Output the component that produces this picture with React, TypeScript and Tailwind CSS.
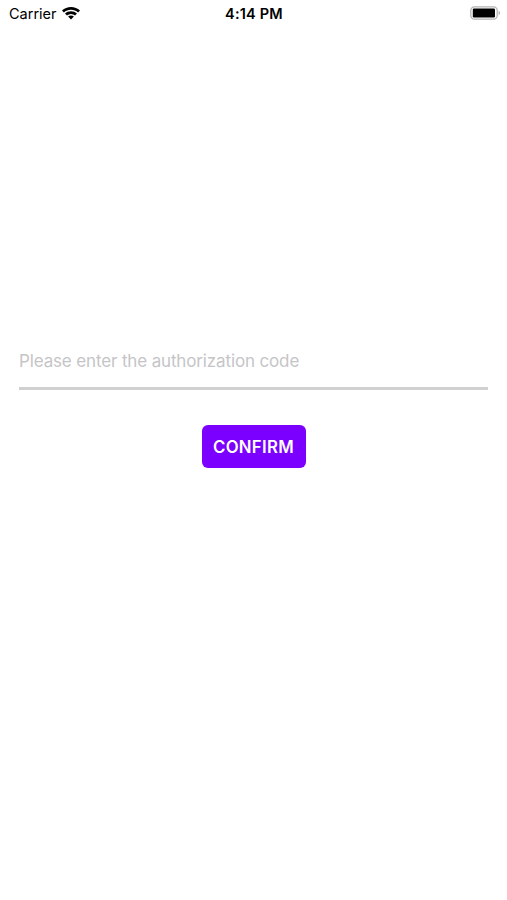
const WifiIcon = () => (
  <svg viewBox="0 0 18 13" className="w-[18px] h-[13px] -mt-0.5">
    <path d="M9 0C5.6 0 2.4 1.3 0 3.5L1.9 5.5C3.8 3.8 6.2 2.8 9 2.8s5.2 1 7.1 2.7L18 3.5C15.6 1.3 12.4 0 9 0Z" />
    <path d="M9 4.2c-2.3 0-4.4.8-6 2.3l2 2.1a5.9 5.9 0 0 1 8 0l2-2.1A8.7 8.7 0 0 0 9 4.2Z" />
    <path d="M9 8.4c-1.1 0-2.1.4-2.9 1.1L9 12.6l2.9-3.1C11.1 8.8 10.1 8.4 9 8.4Z" />
  </svg>
);

const BatteryIcon = () => (
  <svg viewBox="0 0 31 14" className="w-[31px] h-[14px] -mt-0.5">
    <rect x="0.8" y="0.8" width="26.4" height="12.4" rx="3.6" fill="none" stroke="#b4b4b4" strokeWidth="1.3" />
    <rect x="2.8" y="2.6" width="22.2" height="8.8" rx="1.2" />
    <path d="M28.6 4.8v4.4c.9-.4 1.5-1.2 1.5-2.2s-.6-1.8-1.5-2.2Z" fill="#b4b4b4" />
  </svg>
);

const App = () => {
  return (
    <main className="flex flex-col w-full h-[900px] bg-white font-['Inter',sans-serif] text-black">
      <header className="grid grid-cols-3 items-center h-7 pl-[9px] pr-[6px] text-[14.5px]">
        <div className="flex items-center gap-[5px]">
          <span>Carrier</span>
          <WifiIcon />
        </div>
        <span className="-ml-0.5 text-center font-semibold tracking-[0.2px]">
          4:14 PM
        </span>
        <div className="flex justify-end">
          <BatteryIcon />
        </div>
      </header>

      <section className="flex flex-col items-center px-[19px] pt-[306px]">
        <input
          type="text"
          placeholder="Please enter the authorization code"
          className="w-full h-14 pt-px border-b-[3px] border-[#d0d0d0] text-[17px] tracking-[-0.14px] placeholder:text-[#c5c5c7] focus:outline-none"
        />
        <button className="mt-[35px] w-[104px] h-[43px] pt-0.5 rounded-md bg-[#7b00ff] text-white text-[16.8px] font-semibold tracking-[0.3px]">
          CONFIRM
        </button>
      </section>
    </main>
  );
};

export default App;
